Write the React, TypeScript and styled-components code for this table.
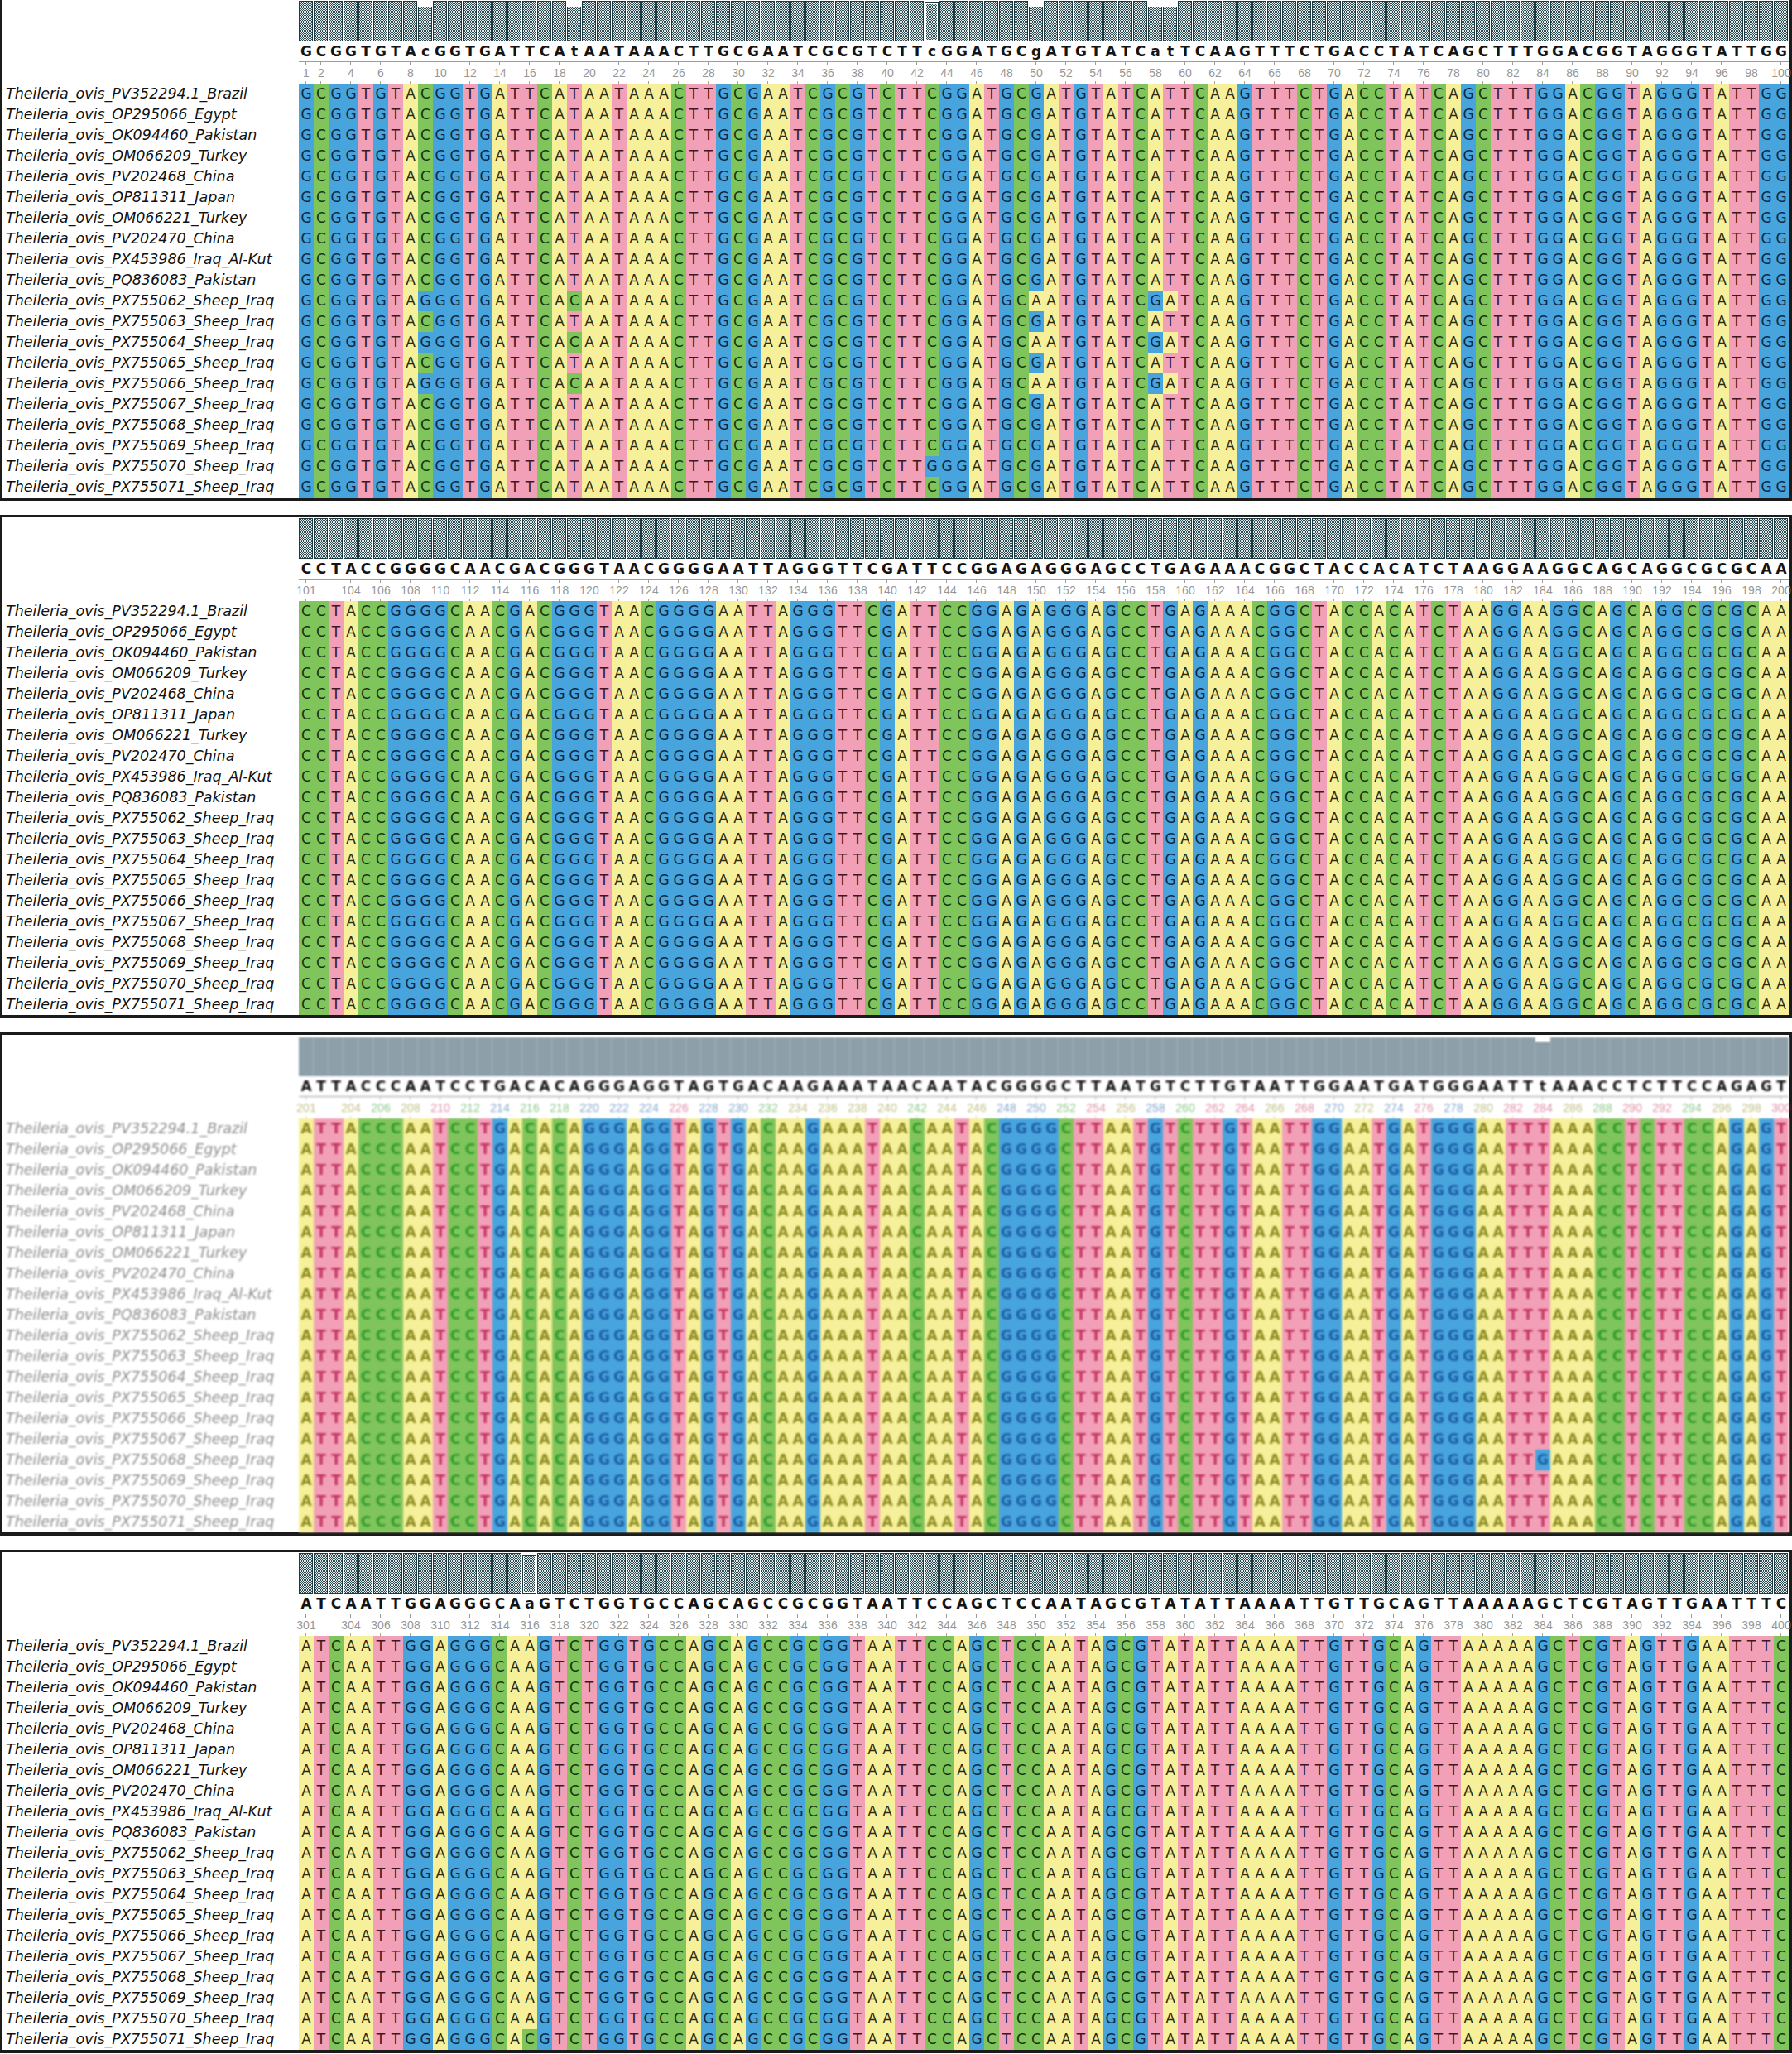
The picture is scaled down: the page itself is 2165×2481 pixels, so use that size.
import React from 'react';
import styled, { createGlobalStyle, css } from 'styled-components';

type Base = 'A' | 'C' | 'G' | 'T';
type Level = 'full' | 'dip' | 'low';

const FILL: Record<Base, string> = { A: '#f6f09b', C: '#80c45c', G: '#48a4dc', T: '#f2a0b7' };
const INK: Record<Base, string> = { A: '#2b2a12', C: '#173410', G: '#0c2846', T: '#3e1722' };
const FADED_INK: Record<Base, string> = { A: '#8d8b22', C: '#2f9c2b', G: '#1c5ea6', T: '#c3325f' };

const NAMES = [
    'Theileria_ovis_PV352294.1_Brazil',
    'Theileria_ovis_OP295066_Egypt',
    'Theileria_ovis_OK094460_Pakistan',
    'Theileria_ovis_OM066209_Turkey',
    'Theileria_ovis_PV202468_China',
    'Theileria_ovis_OP811311_Japan',
    'Theileria_ovis_OM066221_Turkey',
    'Theileria_ovis_PV202470_China',
    'Theileria_ovis_PX453986_Iraq_Al-Kut',
    'Theileria_ovis_PQ836083_Pakistan',
    'Theileria_ovis_PX755062_Sheep_Iraq',
    'Theileria_ovis_PX755063_Sheep_Iraq',
    'Theileria_ovis_PX755064_Sheep_Iraq',
    'Theileria_ovis_PX755065_Sheep_Iraq',
    'Theileria_ovis_PX755066_Sheep_Iraq',
    'Theileria_ovis_PX755067_Sheep_Iraq',
    'Theileria_ovis_PX755068_Sheep_Iraq',
    'Theileria_ovis_PX755069_Sheep_Iraq',
    'Theileria_ovis_PX755070_Sheep_Iraq',
    'Theileria_ovis_PX755071_Sheep_Iraq',
];

interface Block {
    start: number;
    consensus: string;
    // row index -> column (1-based) -> base
    changes: Record<number, Record<number, Base>>;
    faded?: boolean;
}

const iraqSnps: Record<number, Base> = { 9: 'G', 19: 'C', 50: 'A', 58: 'G', 59: 'A' };

const BLOCKS: Block[] = [
    {
        start: 1,
        consensus: 'GCGGTGTAcGGTGATTCAtAATAAACTTGCGAATCGCGTCTTcGGATGCgATGTATCatTCAAGTTTCTGACCTATCAGCTTTGGACGGTAGGGTATTGG',
        changes: { 10: iraqSnps, 12: iraqSnps, 14: iraqSnps, 18: { 43: 'G' } },
    },
    {
        start: 101,
        consensus: 'CCTACCGGGGCAACGACGGGTAACGGGGAATTAGGGTTCGATTCCGGAGAGGGAGCCTGAGAAACGGCTACCACATCTAAGGAAGGCAGCAGGCGCGCAA',
        changes: {},
    },
    {
        start: 201,
        consensus: 'ATTACCCAATCCTGACACAGGGAGGTAGTGACAAGAAATAACAATACGGGGCTTAATGTCTTGTAATTGGAATGATGGGAATTtAAACCTCTTCCAGAGT',
        changes: { 16: { 84: 'G' } },
        faded: true,
    },
    {
        start: 301,
        consensus: 'ATCAATTGGAGGGCAaGTCTGGTGCCAGCAGCCGCGGTAATTCCAGCTCCAATAGCGTATATTAAAATTGTTGCAGTTAAAAAGCTCGTAGTTGAATTTC',
        changes: { 19: { 16: 'C' } },
    },
];

const rowsOf = (block: Block): Base[][] =>
    NAMES.map((_, r) =>
        block.consensus
            .toUpperCase()
            .split('')
            .map((b, i) => (block.changes[r]?.[i + 1] ?? b) as Base)
    );

const levelsOf = (block: Block, rows: Base[][]): Level[] =>
    block.consensus.split('').map((b, i) => {
        const same = rows.filter(r => r[i] === b.toUpperCase()).length;
        if (same === rows.length) return 'full';
        if (same >= rows.length - 1) return 'dip';
        return 'low';
    });

const showNumber = (start: number, i: number) => {
    const pos = start + i;
    if (i === 0) return true;
    return pos % 2 === 0 && (start === 1 || i >= 3);
};

export default function App() {
    return (
        <>
            <GlobalStyle />
            <Page>
                {BLOCKS.map(block => {
                    const rows = rowsOf(block);
                    const levels = levelsOf(block, rows);
                    const faded = !!block.faded;
                    return (
                        <Panel key={block.start}>
                            <LabelColumn $faded={faded}>
                                {NAMES.map(name => (
                                    <Label key={name} $faded={faded}>{name}</Label>
                                ))}
                            </LabelColumn>
                            <AlignColumn $faded={faded}>
                                <BarStrip>
                                    {levels.map((lv, i) => (
                                        <Bar key={i} $level={lv} $faded={faded} />
                                    ))}
                                </BarStrip>
                                <ConsensusRow>
                                    {block.consensus.split('').map((b, i) => (
                                        <ConsensusLetter key={i}>{b}</ConsensusLetter>
                                    ))}
                                </ConsensusRow>
                                <Ruler>
                                    {block.consensus.split('').map((b, i) => {
                                        const shown = showNumber(block.start, i);
                                        return (
                                            <RulerCell
                                                key={i}
                                                $marked={shown}
                                                $tint={faded ? FADED_INK[b.toUpperCase() as Base] : undefined}
                                            >
                                                {shown ? block.start + i : ''}
                                            </RulerCell>
                                        );
                                    })}
                                </Ruler>
                                {rows.map((row, r) => (
                                    <SeqRow key={r}>
                                        {row.map((b, i) => (
                                            <Cell key={i} $base={b} $faded={faded}>{b}</Cell>
                                        ))}
                                    </SeqRow>
                                ))}
                            </AlignColumn>
                        </Panel>
                    );
                })}
            </Page>
        </>
    );
}

const GlobalStyle = createGlobalStyle`
    html, body {
        margin: 0;
        padding: 0;
        background: #ffffff;
    }
    body {
        width: 2165px;
        overflow: hidden;
        font-family: "DejaVu Sans", "Liberation Sans", sans-serif;
    }
`;

const Page = styled('div')`
    display: flex;
    flex-direction: column;
    gap: 17px;
    margin-top: -3px;
`;

const Panel = styled('section')`
    display: grid;
    grid-template-columns: 358px 1800px;
    border-style: solid;
    border-color: #1b1b1b;
    border-width: 3px 4px 4px 3px;
    background: #ffffff;
`;

const LabelColumn = styled('div')<{ $faded: boolean }>`
    display: flex;
    flex-direction: column;
    padding-top: 101px;
    ${p => p.$faded && css`filter: blur(1px);`}
`;

const Label = styled('div')<{ $faded: boolean }>`
    height: 25px;
    line-height: 25px;
    padding-left: 4px;
    font-family: "DejaVu Sans", "Liberation Sans", sans-serif;
    font-style: italic;
    font-size: 17.5px;
    white-space: nowrap;
    color: ${p => (p.$faded ? '#8e8e8e' : '#111111')};
`;

const AlignColumn = styled('div')<{ $faded: boolean }>`
    display: flex;
    flex-direction: column;
    width: 1800px;
    ${p => p.$faded && css`filter: blur(0.8px);`}
`;

const BarStrip = styled('div')`
    display: flex;
    align-items: flex-end;
    height: 50px;
`;

const Bar = styled('div')<{ $level: Level; $faded: boolean }>`
    box-sizing: border-box;
    flex: none;
    ${p =>
        p.$faded
            ? css`
                  width: 18px;
                  height: ${p.$level === 'full' ? 47 : 41}px;
                  background: #8d9fa9;
                  border-right: 1px solid #a2b2ba;
                  border-top: ${p.$level === 'full' ? 'none' : '1px solid #6f838d'};
              `
            : css`
                  width: 17px;
                  margin-right: 1px;
                  height: ${p.$level === 'full' ? 49 : p.$level === 'dip' ? 47 : 42}px;
                  border: 1px solid #1d3a42;
                  background: repeating-conic-gradient(#2b4b53 0 25%, #e3e8e9 0 50%) 0 0 / 2px 2px;
                  ${p.$level === 'dip' && css`box-shadow: inset 0 0 0 1px #ffffff;`}
              `}
`;

const ConsensusRow = styled('div')`
    display: flex;
    height: 24px;
    border-bottom: 1px solid #9c9c9c;
`;

const ConsensusLetter = styled('span')`
    width: 18px;
    flex: none;
    text-align: center;
    line-height: 24px;
    font-family: "DejaVu Sans", "Liberation Sans", sans-serif;
    font-weight: bold;
    font-size: 17px;
    color: #141414;
`;

const Ruler = styled('div')`
    display: flex;
    height: 26px;
`;

const RulerCell = styled('span')<{ $marked: boolean; $tint?: string }>`
    position: relative;
    width: 18px;
    flex: none;
    display: flex;
    align-items: center;
    justify-content: center;
    white-space: nowrap;
    font-family: "Liberation Sans Narrow", "Liberation Sans", sans-serif;
    font-size: 14px;
    color: ${p => p.$tint ?? '#979797'};
    ${p => p.$tint && css`opacity: 0.55;`}

    ${p =>
        p.$marked &&
        css`
            &::before,
            &::after {
                content: '';
                position: absolute;
                left: 8px;
                width: 1px;
            }
            &::before {
                top: 0;
                height: 4px;
                background: #9a9a9a;
            }
            &::after {
                bottom: 0;
                height: 3px;
                background: #b0a283;
            }
        `}
`;

const SeqRow = styled('div')`
    display: flex;
    height: 25px;
`;

const Cell = styled('span')<{ $base: Base; $faded: boolean }>`
    width: 18px;
    height: 25px;
    flex: none;
    text-align: center;
    line-height: 25px;
    font-family: "DejaVu Sans", "Liberation Sans", sans-serif;
    font-size: 17px;
    background: ${p => FILL[p.$base]};
    color: ${p => (p.$faded ? FADED_INK[p.$base] : INK[p.$base])};
    font-weight: ${p => (p.$faded ? 'bold' : 'normal')};
`;
